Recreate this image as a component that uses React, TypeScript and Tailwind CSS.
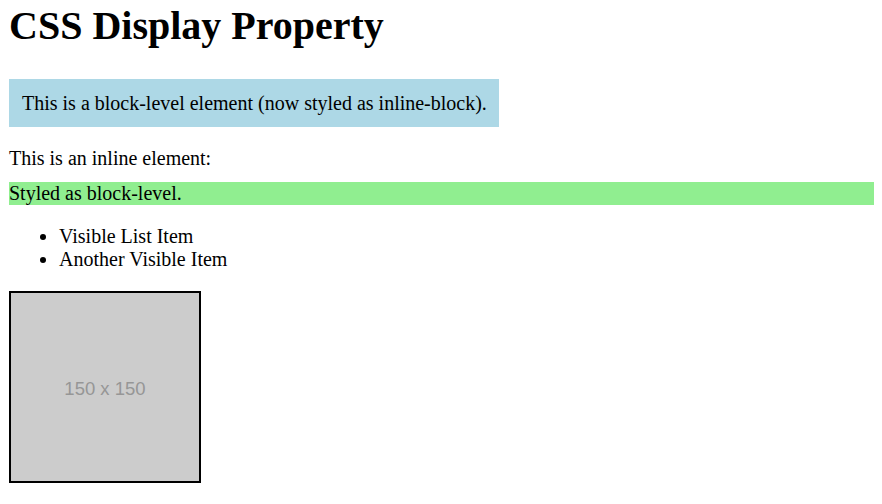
export default function App() {
  return (
    <div className="min-h-[504px] bg-white pl-[9px] pr-[8px] font-['Liberation_Serif',serif] text-[20px] text-black">
      {/* heading */}
      <h1 className="pt-[3px] text-[40px] font-bold leading-[46px]">CSS Display Property</h1>

      {/* block element shown as inline-block */}
      <div className="mt-[30px] inline-block bg-[#add8e6] py-[12px] pl-[13px] pr-[12px] leading-[24px]">
        This is a block-level element (now styled as inline-block).
      </div>

      <p className="mt-[20px] leading-[23px]">This is an inline element:</p>
      <div className="mt-[12px] bg-[#90ee90] leading-[23px]">Styled as block-level.</div>

      <ul className="mt-[20px] list-disc pl-[50px] leading-[23px]">
        <li>Visible List Item</li>
        <li>Another Visible Item</li>
      </ul>

      {/* placeholder image */}
      <div className="mt-[20px] flex h-[192px] w-[192px] items-center justify-center border-2 border-black bg-[#cccccc] pt-[4px] font-['Liberation_Sans',sans-serif] text-[18.5px] text-[#969696]">
        150 x 150
      </div>
    </div>
  );
}
